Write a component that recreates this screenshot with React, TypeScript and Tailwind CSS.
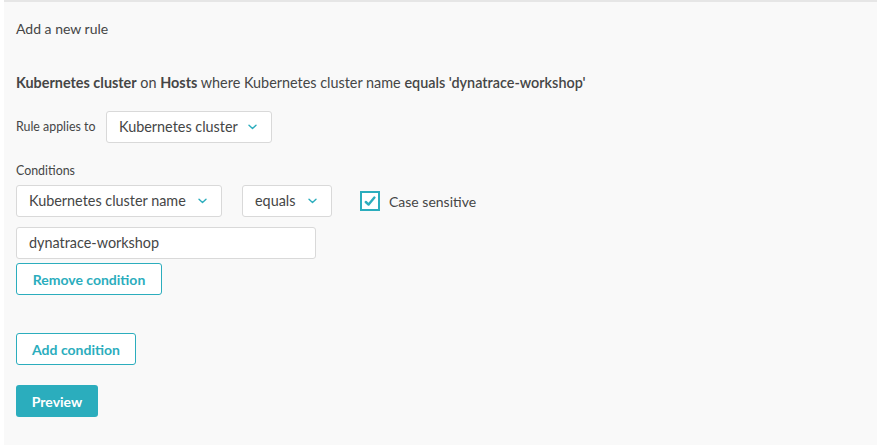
import React from 'react';

const Chevron = () => (
    <svg width="9" height="6" viewBox="0 0 9 6" className="shrink-0">
        <path d="M1 1.2l3.5 3.3 3.5-3.3" fill="none" stroke="#2badbd" strokeWidth="1.4" strokeLinecap="round" strokeLinejoin="round" />
    </svg>
);

const Select: React.FC<{ label: string; className?: string }> = ({ label, className = '' }) => (
    <div className={`h-[32px] bg-white border border-[#d9d9d9] rounded-[3px] flex items-center justify-between pl-[12px] pr-[14px] ${className}`}>
        <span className="text-[14.4px] text-[#454646]">{label}</span>
        <Chevron />
    </div>
);

const App: React.FC = () => {
    return (
        <div className="w-[877px] h-[445px] bg-white pl-[4px] font-['Lato',sans-serif] text-[#454646]">
            <div className="h-full bg-[#f9f9f9] border-t-[2px] border-[#e6e6e6] pl-[12px] pt-[18px]">
                <p className="text-[14px] leading-[18px]">Add a new rule</p>

                <p className="text-[14.4px] leading-[18px] mt-[36px]">
                    <span className="font-bold">Kubernetes cluster</span> on <span className="font-bold">Hosts</span> where Kubernetes cluster name <span className="font-semibold">equals 'dynatrace-workshop'</span>
                </p>

                <div className="flex items-center mt-[19px]">
                    <span className="text-[12.4px] w-[90px]">Rule applies to</span>
                    <Select label="Kubernetes cluster" className="w-[166px]" />
                </div>

                <p className="text-[12.4px] leading-[16px] mt-[20px]">Conditions</p>

                <div className="flex items-center mt-[6px]">
                    <Select label="Kubernetes cluster name" className="w-[206px]" />
                    <Select label="equals" className="w-[90px] ml-[20px]" />
                    <label className="flex items-center ml-[28px] gap-[9px]">
                        <span className="w-[20px] h-[20px] border-[2px] border-[#2badbd] bg-white flex items-center justify-center">
                            <svg width="12" height="10" viewBox="0 0 12 10">
                                <path d="M1.8 6l2.8 2.6 5.8-7" fill="none" stroke="#2badbd" strokeWidth="2.4" strokeLinecap="round" strokeLinejoin="round" />
                            </svg>
                        </span>
                        <span className="text-[14px]">Case sensitive</span>
                    </label>
                </div>

                <div className="mt-[10px] w-[300px] h-[32px] bg-white border border-[#d9d9d9] rounded-[3px] flex items-center pl-[12px] text-[14.4px]">
                    dynatrace-workshop
                </div>

                <button className="mt-[4px] h-[32px] w-[146px] border border-[#2badbd] rounded-[3px] text-[#2badbd] text-[14px] font-bold bg-white">
                    Remove condition
                </button>

                <div>
                    <button className="mt-[38px] h-[32px] w-[120px] border border-[#2badbd] rounded-[3px] text-[#2badbd] text-[14px] font-bold bg-white">
                        Add condition
                    </button>
                </div>

                <div>
                    <button className="mt-[20px] h-[32px] w-[82px] rounded-[3px] bg-[#2badbd] text-white text-[14px] font-bold">
                        Preview
                    </button>
                </div>
            </div>
        </div>
    );
};

export default App;
